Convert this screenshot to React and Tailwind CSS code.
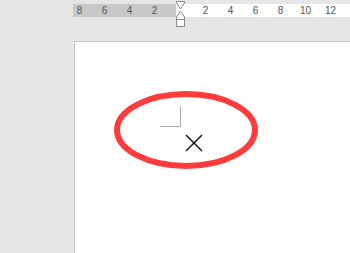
import React from "react";

const leftNums = ["8", "6", "4", "2"];
const rightNums = ["2", "4", "6", "8", "10", "12"];

function IndentMarker() {
  return (
    <svg
      className="absolute left-[175px] top-0"
      width="12"
      height="28"
      viewBox="0 0 12 28"
    >
      <polygon points="1.5,1.5 9.5,1.5 9.5,3 5.5,9 1.5,3" fill="#fff" stroke="#8a8a8a" strokeWidth="1" />
      <polygon points="5.5,11 9.5,17 9.5,19.5 1.5,19.5 1.5,17" fill="#fff" stroke="#8a8a8a" strokeWidth="1" />
      <rect x="1.5" y="19.5" width="8" height="7" fill="#fff" stroke="#8a8a8a" strokeWidth="1" />
    </svg>
  );
}

export default function App() {
  return (
    <div
      className="relative w-[350px] h-[253px] overflow-hidden bg-[#e6e6e6] flex flex-col"
      style={{ fontFamily: '"Liberation Sans", Arial, sans-serif' }}
    >
      {/* Ruler */}
      <div className="mt-[4px] ml-[73px] h-[13px] flex text-[10px] leading-none text-[#555]">
        <div className="w-[103px] bg-[#c8c8c8] flex justify-end items-center pr-[9px]">
          {leftNums.map((n, i) => (
            <span key={i} className="w-[25px] shrink-0 text-center">
              {n}
            </span>
          ))}
        </div>
        <div className="flex-1 bg-white flex items-center pl-[17px]">
          {rightNums.map((n, i) => (
            <span key={i} className="w-[25px] shrink-0 text-center">
              {n}
            </span>
          ))}
        </div>
      </div>
      <IndentMarker />

      {/* Page */}
      <div className="relative ml-[74px] mt-[24px] flex-1 bg-white border-l border-t border-[#c6c6c6]">
        <svg className="absolute left-0 top-0" width="276" height="212">
          <polyline points="85,84.5 105.5,84.5 105.5,64" fill="none" stroke="#a8a8a8" strokeWidth="1" />
          <line x1="111" y1="93" x2="127" y2="109" stroke="#111" strokeWidth="1.4" />
          <line x1="127" y1="93" x2="111" y2="109" stroke="#111" strokeWidth="1.4" />
          <ellipse cx="111" cy="88" rx="69" ry="36" fill="none" stroke="#ff3b3b" strokeWidth="6" />
        </svg>
      </div>
    </div>
  );
}
